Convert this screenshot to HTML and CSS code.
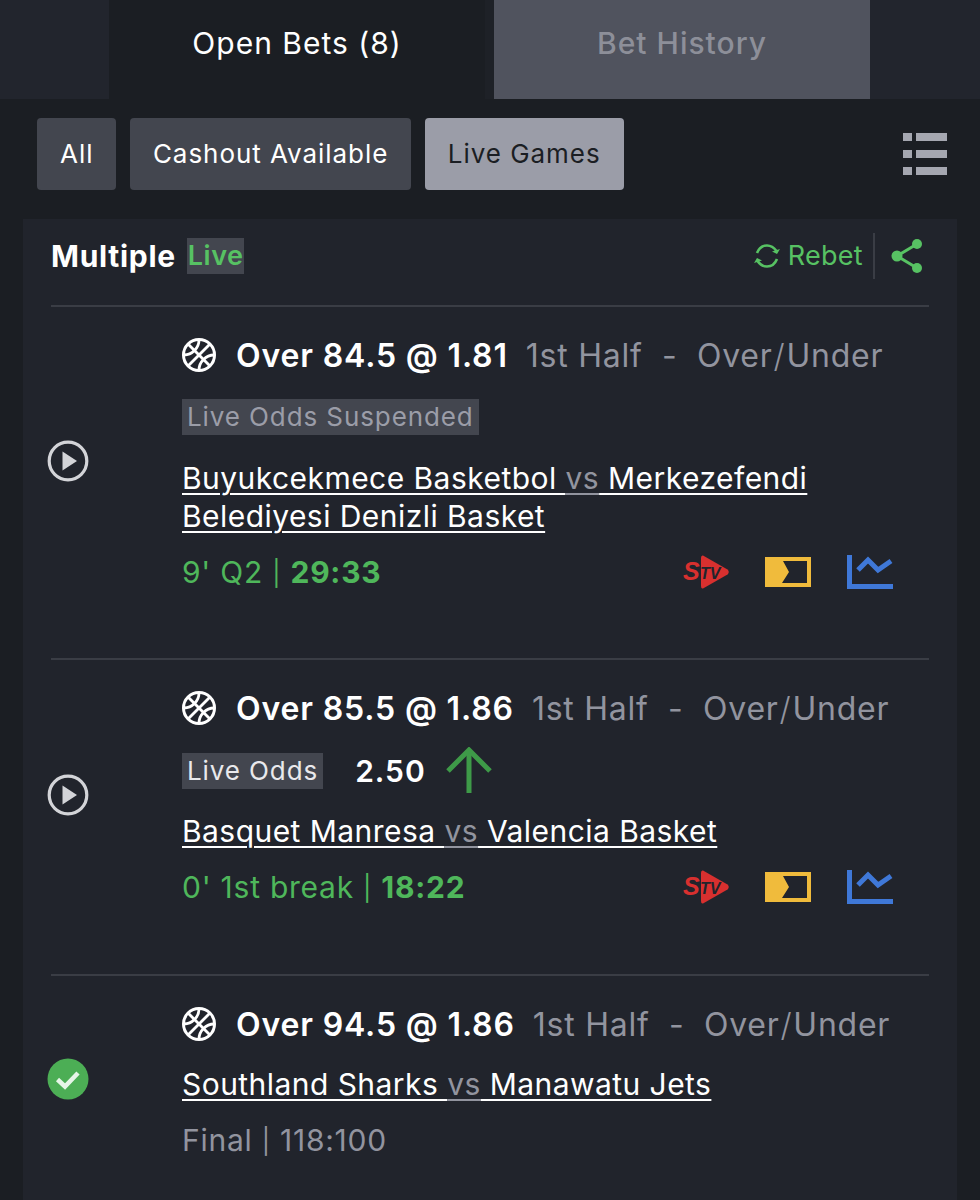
FILE: index.html
```html
<!DOCTYPE html>
<html lang="en">
<head>
    <meta charset="UTF-8">
    <meta name="viewport" content="width=device-width, initial-scale=1.0">
    <title>Open Bets</title>
    <link rel="stylesheet" href="styles.css">
</head>
<body>
    <svg class="sprites" width="0" height="0" aria-hidden="true">
        <symbol id="ball" viewBox="0 0 34 34">
            <circle cx="17" cy="17" r="15.500" fill="none" stroke="#fff" stroke-width="3"/>
            <g fill="none" stroke="#fff" stroke-width="2.800">
                <path d="M6 28 28 6"/>
                <path d="M6 6 28 28"/>
                <path d="M17 2C17 10 10 17 2 17"/>
                <path d="M32 17C24 17 17 24 17 32"/>
            </g>
        </symbol>
        <symbol id="play" viewBox="0 0 42 42">
            <circle cx="21" cy="21" r="18.800" fill="none" stroke="#d3d4d8" stroke-width="3.200"/>
            <path d="M15.500 11.500 30 21 15.500 30.500Z" fill="#d3d4d8"/>
        </symbol>
        <symbol id="tracker" viewBox="0 0 46 30">
            <rect width="46" height="30" fill="#f0bb3c"/>
            <path d="M18 4H42V26H17L24 15Z" fill="#21242c"/>
        </symbol>
        <symbol id="stats" viewBox="0 0 46 34">
            <path d="M2.500 0V31.500H46" fill="none" stroke="#3f78d8" stroke-width="5"/>
            <path d="M11 15 21 5 31 15 44 6" fill="none" stroke="#3f78d8" stroke-width="5"/>
        </symbol>
    </svg>

    <div class="tabs">
        <div class="tab-gap tab-gap-left"></div>
        <div class="tab tab-active">Open Bets (8)</div>
        <div class="tab-gap tab-gap-mid"></div>
        <div class="tab tab-off">Bet History</div>
        <div class="tab-gap tab-gap-right"></div>
    </div>

    <div class="filters">
        <button class="filter">All</button>
        <button class="filter">Cashout Available</button>
        <button class="filter filter-on">Live Games</button>
        <svg class="list-icon" width="44" height="44" viewBox="0 0 44 44">
            <g fill="#a5a7b0">
                <rect x="0" y="1" width="9" height="8"/><rect x="13" y="1" width="31" height="8"/>
                <rect x="0" y="18" width="9" height="8"/><rect x="13" y="18" width="31" height="8"/>
                <rect x="0" y="35" width="9" height="8"/><rect x="13" y="35" width="31" height="8"/>
            </g>
        </svg>
    </div>

    <div class="panel">
        <div class="panel-head">
            <span class="panel-title">Multiple</span>
            <span class="live-tag">Live</span>
            <div class="panel-actions">
                <svg width="28" height="26" viewBox="0 0 28 26" fill="none" stroke="#57c263" stroke-width="2.600">
                    <path d="M4 10C6 5 10 2.500 14 2.500C18 2.500 21 4.500 23.500 8"/>
                    <path d="M24 16C22 21 18 23.500 14 23.500C10 23.500 7 21.500 4.500 18"/>
                    <path d="M27 6 24 11 19 8.500" fill="#57c263" stroke="none"/>
                    <path d="M1 20 4 15 9 17.500" fill="#57c263" stroke="none"/>
                </svg>
                <span class="rebet">Rebet</span>
                <span class="action-line"></span>
                <svg width="34" height="34" viewBox="0 0 34 34">
                    <path d="M26 5 6 17 26 29" fill="none" stroke="#57c263" stroke-width="3"/>
                    <circle cx="26" cy="5" r="5" fill="#57c263"/>
                    <circle cx="6" cy="17" r="5.500" fill="#57c263"/>
                    <circle cx="26" cy="29" r="5" fill="#57c263"/>
                </svg>
            </div>
        </div>

        <div class="bet">
            <svg class="bet-state"><use href="#play"/></svg>
            <div class="bet-body">
                <div class="bet-title">
                    <svg class="ball"><use href="#ball"/></svg>
                    <span class="pick">Over 84.5 @ 1.81</span>
                    <span class="market">1st Half&nbsp; - &nbsp;Over<span class="slash">/</span>Under</span>
                </div>
                <div class="odds-row"><span class="odds-tag odds-muted">Live Odds Suspended</span></div>
                <div class="teams"><span class="name">Buyukcekmece Basketbol </span><span class="vs">vs</span><span class="name"> Merkezefendi</span> <span class="name">Belediyesi Denizli Basket</span></div>
                <div class="status-row">
                    <span class="status">9' Q2 <span class="pipe">|</span> <b>29:33</b></span>
                    <div class="media">
                        <svg class="m-stv" viewBox="0 0 46 36">
                            <path d="M20 1.500 44.500 15.500Q47 18 44.500 20.500L20 34.500Q18 35 18 32V4Q18 1 20 1.500Z" fill="#d8302f"/>
                            <text x="0" y="26" class="stv-s">S</text>
                            <text x="17" y="25" class="stv-tv">TV</text>
                        </svg>
                        <svg class="m-tracker"><use href="#tracker"/></svg>
                        <svg class="m-stats"><use href="#stats"/></svg>
                    </div>
                </div>
            </div>
        </div>

        <div class="bet bet-second">
            <svg class="bet-state"><use href="#play"/></svg>
            <div class="bet-body">
                <div class="bet-title">
                    <svg class="ball"><use href="#ball"/></svg>
                    <span class="pick">Over 85.5 @ 1.86</span>
                    <span class="market">1st Half&nbsp; - &nbsp;Over<span class="slash">/</span>Under</span>
                </div>
                <div class="odds-row odds-row-live">
                    <span class="odds-tag">Live Odds</span>
                    <span class="odds-val">2.50</span>
                    <svg width="46" height="46" viewBox="0 0 46 46" fill="none" stroke="#3e9a48" stroke-width="5">
                        <path d="M23 46V4"/>
                        <path d="M2 24 23 3 44 24"/>
                    </svg>
                </div>
                <div class="teams"><span class="name">Basquet Manresa </span><span class="vs">vs</span><span class="name"> Valencia Basket</span></div>
                <div class="status-row">
                    <span class="status">0' 1st break <span class="pipe">|</span> <b>18:22</b></span>
                    <div class="media">
                        <svg class="m-stv" viewBox="0 0 46 36">
                            <path d="M20 1.500 44.500 15.500Q47 18 44.500 20.500L20 34.500Q18 35 18 32V4Q18 1 20 1.500Z" fill="#d8302f"/>
                            <text x="0" y="26" class="stv-s">S</text>
                            <text x="17" y="25" class="stv-tv">TV</text>
                        </svg>
                        <svg class="m-tracker"><use href="#tracker"/></svg>
                        <svg class="m-stats"><use href="#stats"/></svg>
                    </div>
                </div>
            </div>
        </div>

        <div class="bet bet-last">
            <svg class="bet-state" viewBox="0 0 42 42">
                <circle cx="21" cy="21" r="20.500" fill="#4cae55"/>
                <path d="M10.500 21.500 18 28.500 31 15" fill="none" stroke="#e6f5e7" stroke-width="4.500"/>
            </svg>
            <div class="bet-body">
                <div class="bet-title">
                    <svg class="ball"><use href="#ball"/></svg>
                    <span class="pick">Over 94.5 @ 1.86</span>
                    <span class="market">1st Half&nbsp; - &nbsp;Over<span class="slash">/</span>Under</span>
                </div>
                <div class="teams teams-tight"><span class="name">Southland Sharks </span><span class="vs">vs</span><span class="name"> Manawatu Jets</span></div>
                <div class="status-row"><span class="status status-done">Final <span class="pipe">|</span> 118:100</span></div>
            </div>
        </div>
    </div>
</body>
</html>
```

FILE: styles.css
```css
html, body {
    height: 1200px;
    overflow: hidden;
}
body {
    margin: 0;
    background-color: #1b1e23;
    color: #fff;
    font-family: 'Inter', 'Liberation Sans', sans-serif;
}
.sprites {
    position: absolute;
}
.stv-s {
    font: italic 800 25px 'Liberation Sans', sans-serif;
    fill: #d8302f;
}
.stv-tv {
    font: italic 700 16px 'Liberation Sans', sans-serif;
    fill: #21242c;
}

.tabs {
    display: flex;
    height: 99px;
    background-color: #22252d;
}
.tab-gap-left {
    width: 109px;
}
.tab-gap-mid {
    width: 9px;
    background-color: #1e2127;
}
.tab-gap-right {
    flex: 1;
}
.tab {
    width: 376px;
    display: flex;
    align-items: center;
    justify-content: center;
    padding-bottom: 14px;
    box-sizing: border-box;
    font-size: 30px;
    letter-spacing: 1px;
}
.tab-active {
    background-color: #1b1e23;
}
.tab-off {
    background-color: #50535e;
    color: #8d8f99;
    font-weight: 500;
}

.filters {
    display: flex;
    align-items: center;
    gap: 13.500px;
    padding: 19px 33px 0 37px;
}
.filter {
    height: 72px;
    padding: 0 23px 2px;
    border: none;
    border-radius: 4px;
    background-color: #43464f;
    color: #fff;
    font-family: inherit;
    font-size: 26px;
    letter-spacing: 0.950px;
}
.filter-on {
    background-color: #9b9da8;
    color: #1b1e23;
}
.list-icon {
    margin-left: auto;
}

.panel {
    margin: 29px 23px 0;
    padding: 0 28px;
    background-color: #21242c;
}
.panel-head {
    display: flex;
    align-items: center;
    height: 88px;
    border-bottom: 2px solid #3a3d45;
    padding-bottom: 13px;
    box-sizing: border-box;
}
.panel-title {
    font-size: 30px;
    font-weight: 700;
    letter-spacing: 0.700px;
}
.live-tag {
    margin-left: 11px;
    padding: 0 1px;
    background-color: #43464f;
    color: #57c263;
    font-size: 27px;
    font-weight: 600;
    letter-spacing: 0.500px;
    line-height: 36px;
}
.panel-actions {
    margin-left: auto;
    display: flex;
    align-items: center;
    padding-right: 4px;
}
.rebet {
    margin-left: 7px;
    color: #57c263;
    font-size: 27px;
    letter-spacing: 0.300px;
}
.action-line {
    width: 2px;
    height: 46px;
    margin: 0 16px 0 10px;
    background-color: #3a3d45;
}

.bet {
    display: flex;
    align-items: center;
    border-bottom: 2px solid #3a3d45;
    padding: 23px 0 67px;
}
.bet-second {
    padding-bottom: 68px;
}
.bet-last {
    border-bottom: none;
    padding-bottom: 90px;
}
.bet-state {
    width: 42px;
    height: 42px;
    margin-left: -4px;
    flex-shrink: 0;
}
.bet-body {
    margin-left: 93px;
    flex: 1;
    min-width: 0;
}
.bet-title {
    display: flex;
    align-items: center;
    height: 50px;
}
.ball {
    width: 34px;
    height: 34px;
    flex-shrink: 0;
}
.pick {
    margin-left: 20px;
    font-size: 32px;
    font-weight: 600;
    letter-spacing: 0.850px;
}
.market {
    margin-left: 18px;
    color: #92949f;
    font-size: 32px;
    letter-spacing: 0.750px;
}
.slash {
    margin: 0 1px;
    font-weight: 300;
}
.odds-row {
    display: flex;
    align-items: center;
    height: 46px;
    margin-top: 14px;
}
.odds-row-live span {
    margin-top: 2px;
}
.odds-tag {
    padding: 0 5px;
    background-color: #43464f;
    color: #e9e9ec;
    font-size: 26px;
    letter-spacing: 0.900px;
    line-height: 36px;
}
.odds-muted {
    color: #9b9da8;
}
.odds-val {
    margin: 0 20px 0 32px;
    font-size: 30px;
    font-weight: 600;
    letter-spacing: 1px;
}
.teams {
    margin-top: 19px;
    padding-right: 80px;
    font-size: 30px;
    letter-spacing: 0.450px;
    line-height: 38px;
}
.name,
.vs {
    text-decoration: underline;
    text-underline-offset: 4px;
    text-decoration-thickness: 2px;
}
.teams-tight {
    margin-top: 16px;
}
.vs {
    color: #92949f;
}
.status-row {
    display: flex;
    align-items: center;
    justify-content: space-between;
    margin-top: 18px;
    padding-right: 36px;
    height: 38px;
}
.status {
    color: #4fb75b;
    font-size: 30px;
    letter-spacing: 0.750px;
}
.status b {
    font-weight: 700;
}
.pipe {
    font-size: 25px;
    font-weight: 400;
    vertical-align: 1px;
}
.status-done {
    color: #92949f;
}
.media {
    display: flex;
    align-items: center;
    gap: 36px;
}
.m-stv {
    width: 46px;
    height: 36px;
}
.m-tracker {
    width: 46px;
    height: 30px;
}
.m-stats {
    width: 46px;
    height: 34px;
}
```
